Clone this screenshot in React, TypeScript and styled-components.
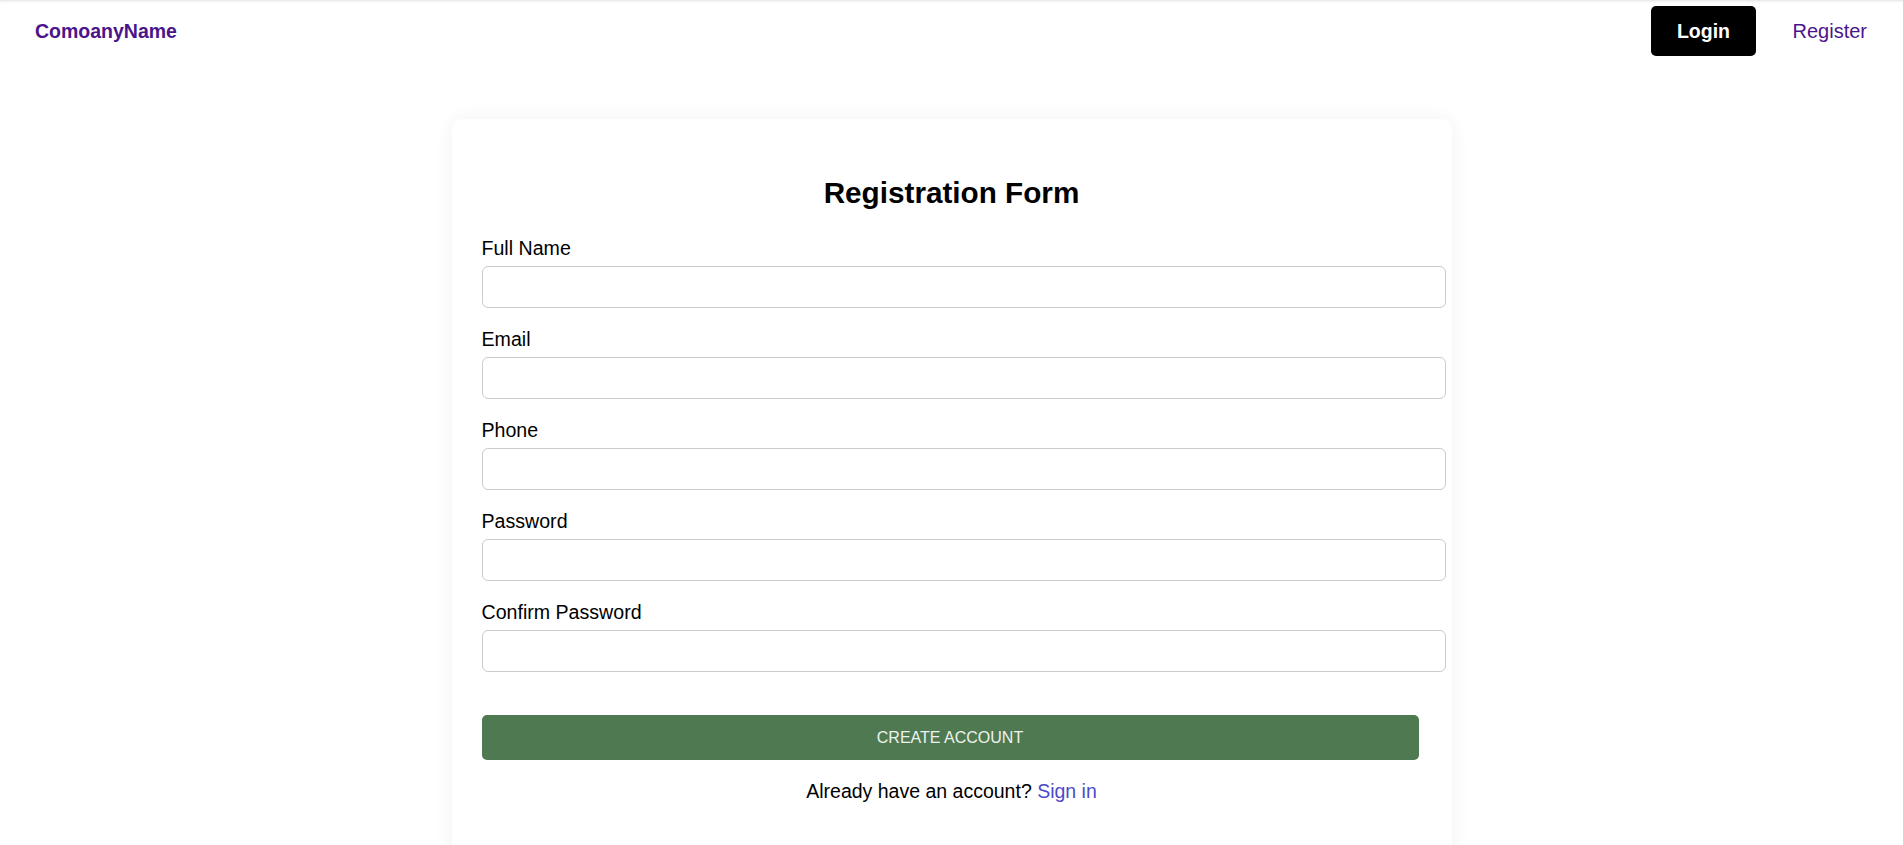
import styled, { createGlobalStyle } from "styled-components";

const GlobalStyle = createGlobalStyle`
  body {
    margin: 0;
    background: #ffffff;
    font-family: "Liberation Sans", Arial, sans-serif;
    color: #000000;
  }
  * {
    box-sizing: content-box;
  }
`;

const Nav = styled.nav`
  display: flex;
  align-items: center;
  justify-content: space-between;
  height: 62px;
  padding: 0 36px 0 35px;
  box-shadow: inset 0 3px 3px -2px rgba(0, 0, 0, 0.12);
`;

const Brand = styled.a`
  font-size: 19.5px;
  font-weight: bold;
  color: #4a148c;
  text-decoration: none;
`;

const NavLinks = styled.div`
  display: flex;
  align-items: center;
  gap: 37px;
`;

const LoginButton = styled.button`
  height: 50px;
  padding: 0 25.5px;
  border: none;
  border-radius: 5px;
  background: #000000;
  color: #ffffff;
  font-family: "Liberation Sans", Arial, sans-serif;
  font-size: 19.5px;
  font-weight: bold;
`;

const NavLink = styled.a`
  font-size: 20px;
  color: #4a148c;
  text-decoration: none;
`;

const Main = styled.main`
  display: flex;
  justify-content: center;
  padding-top: 57px;
`;

const Card = styled.div`
  width: 940px;
  padding: 30px 30px 70px;
  background: #ffffff;
  border-radius: 10px;
  box-shadow: 0 0 20px rgba(0, 0, 0, 0.06);
`;

const Title = styled.h2`
  margin: 27px 0 28px;
  text-align: center;
  font-size: 29.7px;
  line-height: 33px;
  font-weight: bold;
`;

const Field = styled.div`
  margin-bottom: 20px;
`;

const Label = styled.label`
  display: block;
  font-size: 19.6px;
  line-height: 22px;
  margin-bottom: 7px;
`;

const Input = styled.input`
  display: block;
  width: 100%;
  height: 18px;
  padding: 11px;
  border: 1px solid #cccccc;
  border-radius: 6px;
  font-size: 16px;
  outline: none;
`;

const SubmitButton = styled.button`
  display: block;
  width: 937px;
  height: 45px;
  margin-top: 43px;
  padding: 0;
  border: none;
  border-radius: 5px;
  background: #4f7a51;
  color: #eef2ee;
  font-family: "Liberation Sans", Arial, sans-serif;
  font-size: 16px;
  font-weight: 300;
`;

const Footer = styled.p`
  margin: 20px 0 0;
  text-align: center;
  font-size: 19.5px;
  line-height: 22px;
`;

const SignIn = styled.a`
  color: #4b4bc8;
  text-decoration: none;
`;

const fields = [
  { id: "fullName", label: "Full Name", type: "text" },
  { id: "email", label: "Email", type: "email" },
  { id: "phone", label: "Phone", type: "tel" },
  { id: "password", label: "Password", type: "password" },
  { id: "confirmPassword", label: "Confirm Password", type: "password" },
];

function App() {
  return (
    <>
      <GlobalStyle />
      <Nav>
        <Brand href="#">ComoanyName</Brand>
        <NavLinks>
          <LoginButton>Login</LoginButton>
          <NavLink href="#">Register</NavLink>
        </NavLinks>
      </Nav>
      <Main>
        <Card>
          <Title>Registration Form</Title>
          <form onSubmit={(e) => e.preventDefault()}>
            {fields.map((field) => (
              <Field key={field.id}>
                <Label htmlFor={field.id}>{field.label}</Label>
                <Input id={field.id} type={field.type} />
              </Field>
            ))}
            <SubmitButton type="submit">CREATE ACCOUNT</SubmitButton>
          </form>
          <Footer>
            Already have an account? <SignIn href="#">Sign in</SignIn>
          </Footer>
        </Card>
      </Main>
    </>
  );
}

export default App;
